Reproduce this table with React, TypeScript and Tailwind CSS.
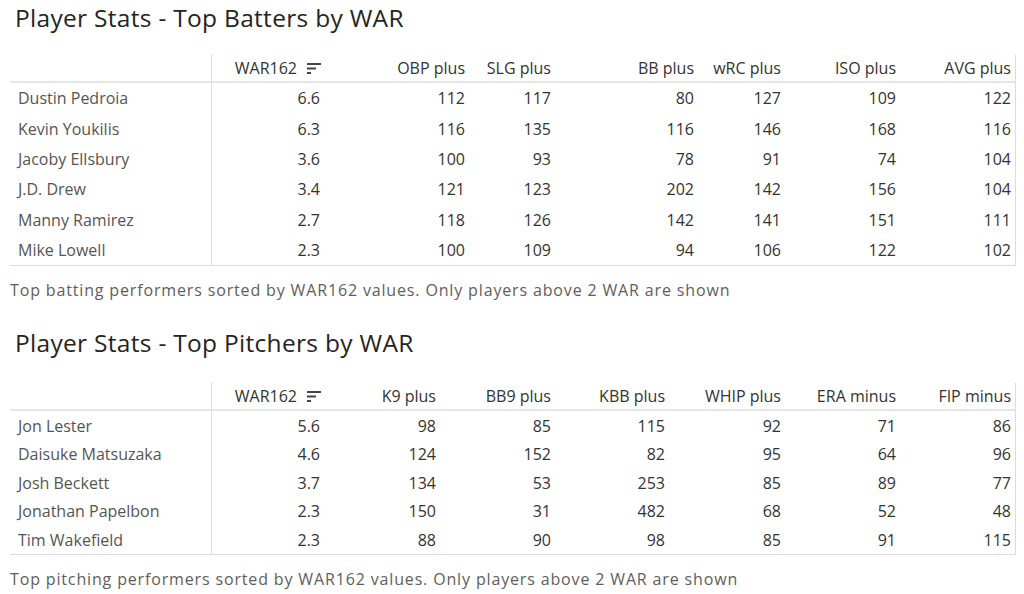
import React from "react";

interface StatTableProps {
  readonly columns: string[];
  readonly widths: string;
  readonly rows: (string | number)[][];
  readonly rowHeight: string;
}

const SortIcon = () => (
  <svg width="15" height="13" viewBox="0 0 15 13" className="ml-[10px] shrink-0">
    <rect x="0" y="1" width="14" height="2" fill="#444" />
    <rect x="0" y="5.5" width="9" height="2" fill="#444" />
    <rect x="0" y="10" width="4" height="2" fill="#444" />
  </svg>
);

const StatTable = ({ columns, widths, rows, rowHeight }: StatTableProps) => {
  return (
    <div className={`ml-[10px] w-[1006px] grid ${widths} border-r border-b border-[#dcdcdc] font-['Open_Sans',sans-serif] text-[16px]`}>
      <div className="h-[28px] border-b-2 border-[#e6e6e6] border-r border-r-[#dcdcdc]" />
      {columns.map((col, i) => (
        <div
          key={col}
          className="h-[28px] border-b-2 border-[#e6e6e6] flex items-center justify-end pr-[5px] text-[#333] whitespace-nowrap"
        >
          {i === 0 ? (
            <span className="flex items-center mr-[-2px]">
              {col}
              <SortIcon />
            </span>
          ) : (
            col
          )}
        </div>
      ))}
      {rows.map((row) =>
        row.map((cell, j) => (
          <div
            key={`${row[0]}-${j}`}
            className={`${rowHeight} flex items-center whitespace-nowrap ${
              j === 0
                ? "pl-[8px] text-[#555] border-r border-[#dcdcdc]"
                : "justify-end pr-[5px] text-[#333]"
            }`}
          >
            {cell}
          </div>
        ))
      )}
    </div>
  );
};

const batters = [
  ["Dustin Pedroia", "6.6", 112, 117, 80, 127, 109, 122],
  ["Kevin Youkilis", "6.3", 116, 135, 116, 146, 168, 116],
  ["Jacoby Ellsbury", "3.6", 100, 93, 78, 91, 74, 104],
  ["J.D. Drew", "3.4", 121, 123, 202, 142, 156, 104],
  ["Manny Ramirez", "2.7", 118, 126, 142, 141, 151, 111],
  ["Mike Lowell", "2.3", 100, 109, 94, 106, 122, 102],
];

const pitchers = [
  ["Jon Lester", "5.6", 98, 85, 115, 92, 71, 86],
  ["Daisuke Matsuzaka", "4.6", 124, 152, 82, 95, 64, 96],
  ["Josh Beckett", "3.7", 134, 53, 253, 85, 89, 77],
  ["Jonathan Papelbon", "2.3", 150, 31, 482, 68, 52, 48],
  ["Tim Wakefield", "2.3", 88, 90, 98, 85, 91, 115],
];

export default function App() {
  return (
    <div className="w-[1024px] h-[594px] bg-white overflow-hidden">
      <h1 className="pl-[15px] pt-[2px] h-[55px] text-[24.5px] leading-[32px] text-[#252423] font-['Open_Sans',sans-serif] tracking-[0.3px]">
        Player Stats - Top Batters by WAR
      </h1>
      <StatTable
        columns={["WAR162", "OBP plus", "SLG plus", "BB plus", "wRC plus", "ISO plus", "AVG plus"]}
        widths="grid-cols-[202px_113px_145px_86px_143px_87px_115px_115px]"
        rows={batters}
        rowHeight="h-[30.4px]"
      />
      <p className="pl-[10px] mt-[12px] h-[24px] text-[16px] leading-[24px] text-[#605e5c] font-['Open_Sans',sans-serif] tracking-[0.85px] whitespace-nowrap">
        Top batting performers sorted by WAR162 values. Only players above 2 WAR are shown
      </p>
      <h1 className="pl-[15px] mt-[25px] h-[56px] text-[24.5px] leading-[32px] text-[#252423] font-['Open_Sans',sans-serif] tracking-[0.3px]">
        Player Stats - Top Pitchers by WAR
      </h1>
      <StatTable
        columns={["WAR162", "K9 plus", "BB9 plus", "KBB plus", "WHIP plus", "ERA minus", "FIP minus"]}
        widths="grid-cols-[202px_113px_116px_115px_114px_116px_115px_115px]"
        rows={pitchers}
        rowHeight="h-[28.6px]"
      />
      <p className="pl-[10px] mt-[12px] h-[24px] text-[16px] leading-[24px] text-[#605e5c] font-['Open_Sans',sans-serif] tracking-[0.85px] whitespace-nowrap">
        Top pitching performers sorted by WAR162 values. Only players above 2 WAR are shown
      </p>
    </div>
  );
}
